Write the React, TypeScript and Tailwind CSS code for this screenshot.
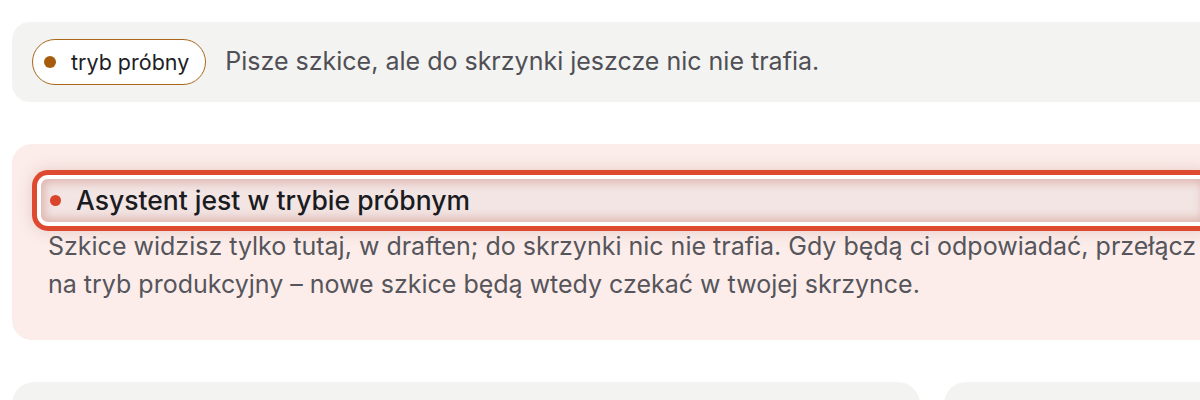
import React from 'react';

const font = { fontFamily: 'Inter, "Noto Sans", sans-serif' };

const App: React.FC = () => {
  return (
    <div className="w-[1200px] h-[400px] overflow-hidden bg-white" style={font}>
      <div className="w-[1230px] ml-3 pt-[22px] flex flex-col gap-[42px]">
        {/* status strip */}
        <div className="flex items-center gap-[19px] rounded-[18px] bg-[#f3f3f1] px-5 py-[17px]">
          <span className="flex h-[46px] items-center gap-[15px] rounded-full border-[1.5px] border-[#a9671c] bg-white pl-[11px] pr-4 text-[21.5px] text-[#1d1d26]">
            <span className="h-3 w-3 rounded-full bg-[#a65c0b]" />
            tryb próbny
          </span>
          <p className="text-[25px] text-[#4f4f55]">Pisze szkice, ale do skrzynki jeszcze nic nie trafia.</p>
        </div>

        {/* warning card */}
        <div className="rounded-[20px] bg-[#fcedea] px-9 pt-[35px] pb-[37px]">
          <h2
            tabIndex={-1}
            className="-ml-[7px] flex h-[43px] items-center gap-[15px] rounded-[7px] bg-[#f2e5e3] pl-[9px] text-[26.5px] font-medium text-[#1b1b22] shadow-[inset_0_0_9px_4px_rgba(205,140,132,0.5),0_0_0_4px_#ffffff,0_0_0_9px_#de4a30,0_0_16px_9px_rgba(150,80,70,0.22)]"
          >
            <span className="h-[11px] w-[11px] rounded-full bg-[#d9442b]" />
            Asystent jest w trybie próbnym
          </h2>
          <p className="mt-[5px] text-[25px] leading-[38px] text-[#55555b]">
            Szkice widzisz tylko tutaj, w draften; do skrzynki nic nie trafia. Gdy będą ci odpowiadać, przełącz na tryb produkcyjny – nowe szkice będą wtedy czekać w twojej skrzynce.
          </p>
        </div>

        {/* lower cards */}
        <div className="grid grid-cols-[908px_1fr] gap-6">
          <div className="h-40 rounded-[22px] bg-[#f3f3f1]" />
          <div className="h-40 rounded-[22px] bg-[#f3f3f1]" />
        </div>
      </div>
    </div>
  );
};

export default App;
